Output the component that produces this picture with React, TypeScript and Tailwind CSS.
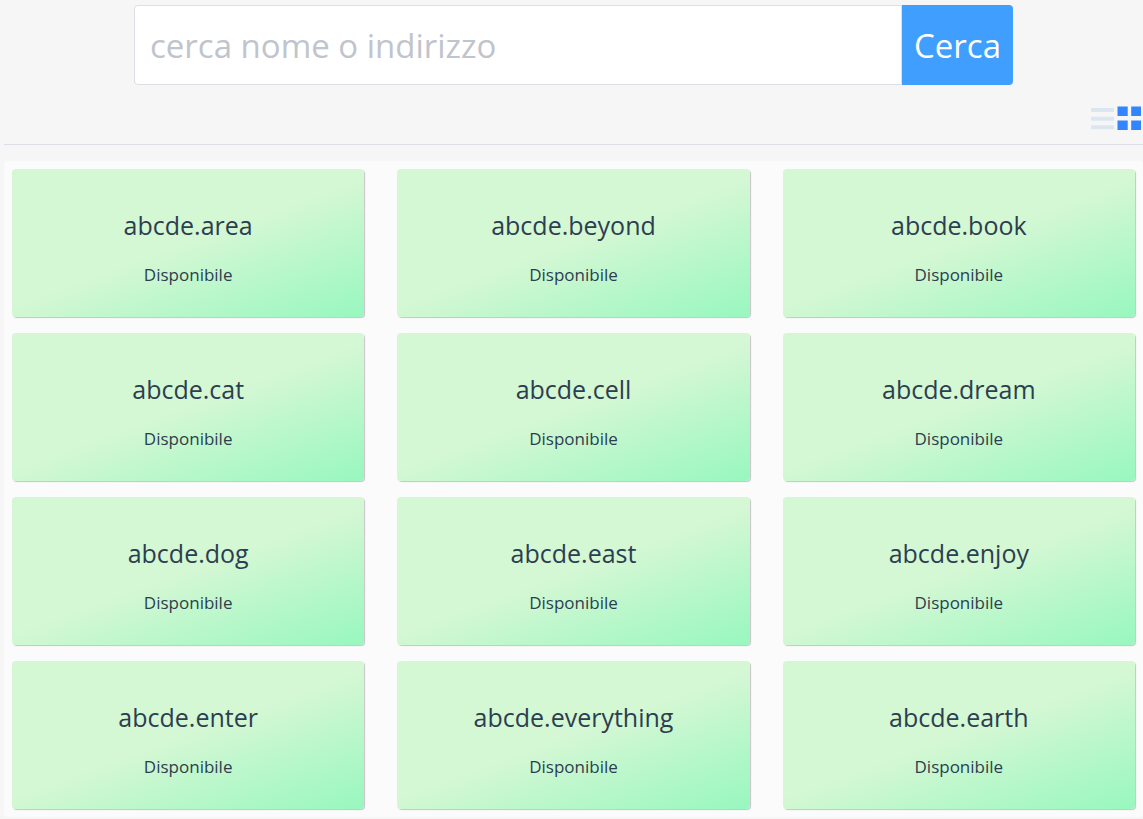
import { useState } from "react";

const names = [
  "area", "beyond", "book",
  "cat", "cell", "dream",
  "dog", "east", "enjoy",
  "enter", "everything", "earth",
];

function ListIcon() {
  return (
    <svg width="24" height="24" viewBox="0 0 24 24" fill="currentColor" aria-hidden="true">
      <rect x="0" y="2" width="23" height="4" />
      <rect x="0" y="10.8" width="23" height="4" />
      <rect x="0" y="19.2" width="23" height="4" />
    </svg>
  );
}

function GridIcon() {
  return (
    <svg width="24" height="24" viewBox="0 0 24 24" fill="currentColor" aria-hidden="true">
      <rect x="0.5" y="0.5" width="10.2" height="9.5" />
      <rect x="14.2" y="0.5" width="10" height="9.5" />
      <rect x="0.5" y="14.5" width="10.2" height="9.5" />
      <rect x="14.2" y="14.5" width="10" height="9.5" />
    </svg>
  );
}

function DomainCard({ name }: { name: string }) {
  return (
    <article className="flex h-[148px] flex-col items-center rounded bg-[linear-gradient(160deg,#d4f7d4_50%,#98f7bf_100%)] pt-9 text-[#2c3e50] shadow-[1px_1px_1px_#c8c3ca]">
      <h2 className="text-[25px] leading-10">{name}</h2>
      <p className="mt-4 text-[17px] leading-7">Disponibile</p>
    </article>
  );
}

export default function App() {
  const [query, setQuery] = useState("");
  return (
    <main className="min-h-screen bg-[#f6f6f6] pt-[5px] pl-1 font-['Open_Sans','Noto_Sans',sans-serif]">
      <form
        className="mx-auto flex h-20 w-full max-w-[879px]"
        onSubmit={(event) => event.preventDefault()}
      >
        <input
          type="text"
          aria-label="cerca nome o indirizzo"
          placeholder="cerca nome o indirizzo"
          value={query}
          onChange={(event) => setQuery(event.target.value)}
          className="min-w-0 flex-1 rounded-l border border-[#dcdfe6] bg-white px-[15px] pt-0.5 text-[33px] text-[#606266] outline-none placeholder:text-[#c0c4cc]"
        />
        <button type="submit" className="w-[111px] rounded-r bg-[#409eff] pt-0.5 text-[33px] text-white">
          Cerca
        </button>
      </form>

      <div className="mt-[21px] mb-4 flex justify-end gap-0.5 border-b border-[#dcdfe6] pr-0.5 pb-3.5">
        <button type="button" aria-label="Elenco" className="text-[#dce6f0]">
          <ListIcon />
        </button>
        <button type="button" aria-label="Griglia" className="text-[#3385ff]">
          <GridIcon />
        </button>
      </div>

      <section className="grid grid-cols-3 gap-x-[33px] gap-y-4 rounded bg-[#fbfbfb] p-2">
        {names.map((name) => (
          <DomainCard key={name} name={`abcde.${name}`} />
        ))}
      </section>
    </main>
  );
}
